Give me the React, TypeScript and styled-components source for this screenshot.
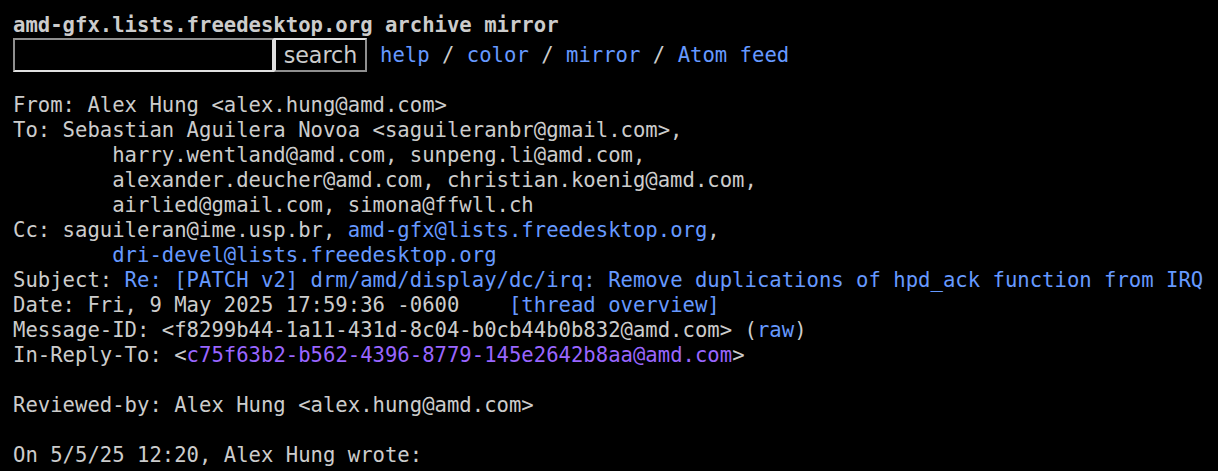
import React from "react";
import styled, { createGlobalStyle } from "styled-components";

const Global = createGlobalStyle`
  html, body {
    margin: 0;
    padding: 0;
    background: #000;
  }
  body {
    color: #ccc;
    font-family: "DejaVu Sans Mono", monospace;
    font-size: 20.6px;
    line-height: 25px;
  }
`;

const Page = styled.div`
  padding: 13px 0 0 13px;
`;

const Header = styled.form`
  display: flex;
  flex-direction: column;
  margin: 0;
`;

const Title = styled.b`
  display: block;
  height: 25px;
  font-weight: bold;
  color: #ccc;
  white-space: pre;
`;

const SearchRow = styled.div`
  display: flex;
  align-items: center;
  height: 34px;
  white-space: pre;
`;

const SearchInput = styled.input`
  box-sizing: border-box;
  width: 261px;
  height: 34px;
  margin: 0;
  padding: 0 4px;
  background: #000;
  color: #ccc;
  border-width: 2px;
  border-style: solid;
  border-color: #8f8f8f #e0e0e0 #e0e0e0 #8f8f8f;
  font: inherit;
  outline: none;
`;

const SearchButton = styled.button`
  box-sizing: border-box;
  width: 93px;
  height: 34px;
  margin: 0;
  padding: 0;
  background: #000;
  color: #ccc;
  border-width: 2px;
  border-style: solid;
  border-color: #e0e0e0 #8f8f8f #8f8f8f #e0e0e0;
  font-family: "DejaVu Sans", sans-serif;
  font-size: 22.2px;
  line-height: 25px;
`;

const Nav = styled.span`
  margin-left: 13px;
  white-space: pre;
`;

const Link = styled.a<{ $visited?: boolean }>`
  color: ${(p) => (p.$visited ? "#96f" : "#69f")};
  text-decoration: none;
`;

const Message = styled.pre`
  margin: 21px 0 0 0;
  font: inherit;
  white-space: pre;
`;

export default function App() {
  return (
    <>
      <Global />
      <Page>
        <Header onSubmit={(e) => e.preventDefault()}>
          <Title>amd-gfx.lists.freedesktop.org archive mirror</Title>
          <SearchRow>
            <SearchInput type="text" name="q" />
            <SearchButton type="submit">search</SearchButton>
            <Nav>
              <Link href="#">help</Link>
              {" / "}
              <Link href="#">color</Link>
              {" / "}
              <Link href="#">mirror</Link>
              {" / "}
              <Link href="#">Atom feed</Link>
            </Nav>
          </SearchRow>
        </Header>
        <Message>
          {"From: Alex Hung <alex.hung@amd.com>\n"}
          {"To: Sebastian Aguilera Novoa <saguileranbr@gmail.com>,\n"}
          {"        harry.wentland@amd.com, sunpeng.li@amd.com,\n"}
          {"        alexander.deucher@amd.com, christian.koenig@amd.com,\n"}
          {"        airlied@gmail.com, simona@ffwll.ch\n"}
          {"Cc: saguileran@ime.usp.br, "}
          <Link href="#">amd-gfx@lists.freedesktop.org</Link>
          {",\n        "}
          <Link href="#">dri-devel@lists.freedesktop.org</Link>
          {"\nSubject: "}
          <Link href="#">
            Re: [PATCH v2] drm/amd/display/dc/irq: Remove duplications of hpd_ack function from IRQ
          </Link>
          {"\nDate: Fri, 9 May 2025 17:59:36 -0600    "}
          <Link href="#">[thread overview]</Link>
          {"\nMessage-ID: <f8299b44-1a11-431d-8c04-b0cb44b0b832@amd.com> ("}
          <Link href="#">raw</Link>
          {")\nIn-Reply-To: <"}
          <Link href="#" $visited>
            c75f63b2-b562-4396-8779-145e2642b8aa@amd.com
          </Link>
          {">\n\n"}
          {"Reviewed-by: Alex Hung <alex.hung@amd.com>\n\n"}
          {"On 5/5/25 12:20, Alex Hung wrote:\n"}
        </Message>
      </Page>
    </>
  );
}
